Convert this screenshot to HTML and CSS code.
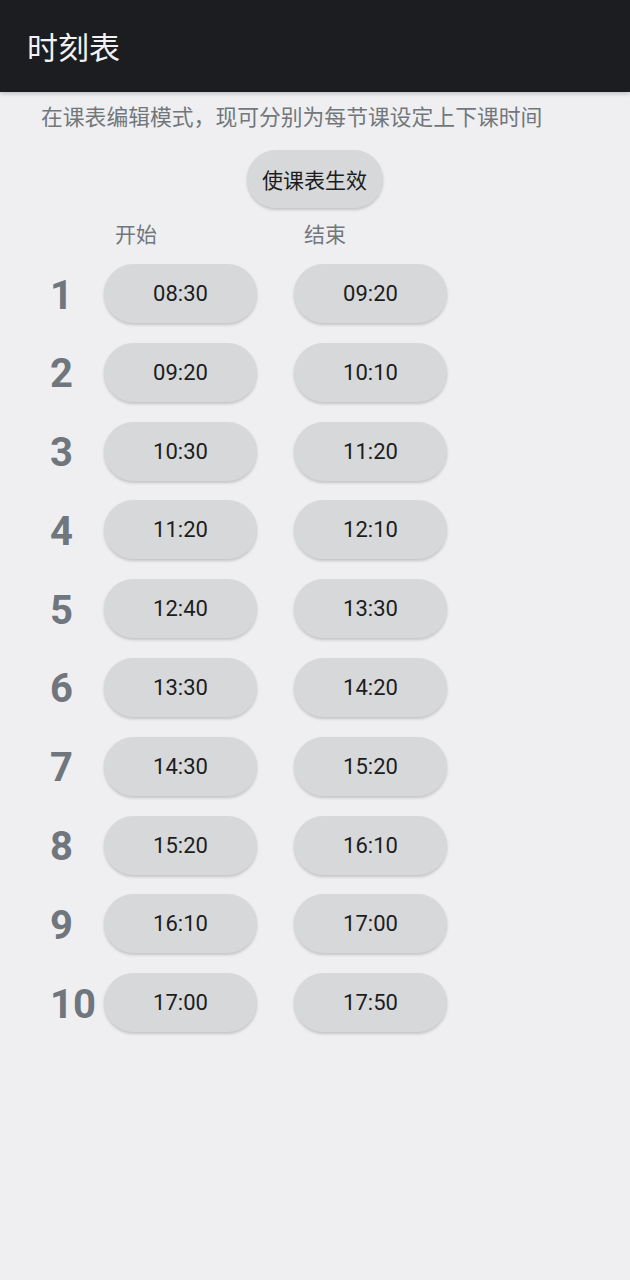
FILE: index.html
```html
<!DOCTYPE html>
<html lang="zh">
<head>
<meta charset="utf-8">
<link rel="stylesheet" href="styles.css">
</head>
<body>
<header class="appbar"><h1 class="title">时刻表</h1></header>
<main class="content">
  <p class="hint">在课表编辑模式，现可分别为每节课设定上下课时间</p>
  <div class="apply-wrap"><button class="pill apply">使课表生效</button></div>
  <div class="labels"><span class="label">开始</span><span class="label">结束</span></div>
  <div class="rows">
    <div class="row"><span class="num">1</span><button class="pill time">08:30</button><button class="pill time">09:20</button></div>
    <div class="row"><span class="num">2</span><button class="pill time">09:20</button><button class="pill time">10:10</button></div>
    <div class="row"><span class="num">3</span><button class="pill time">10:30</button><button class="pill time">11:20</button></div>
    <div class="row"><span class="num">4</span><button class="pill time">11:20</button><button class="pill time">12:10</button></div>
    <div class="row"><span class="num">5</span><button class="pill time">12:40</button><button class="pill time">13:30</button></div>
    <div class="row"><span class="num">6</span><button class="pill time">13:30</button><button class="pill time">14:20</button></div>
    <div class="row"><span class="num">7</span><button class="pill time">14:30</button><button class="pill time">15:20</button></div>
    <div class="row"><span class="num">8</span><button class="pill time">15:20</button><button class="pill time">16:10</button></div>
    <div class="row"><span class="num">9</span><button class="pill time">16:10</button><button class="pill time">17:00</button></div>
    <div class="row"><span class="num">10</span><button class="pill time">17:00</button><button class="pill time">17:50</button></div>
  </div>
</main>
</body>
</html>
```
FILE: styles.css
```css
* { box-sizing: border-box; }
html, body {
  margin: 0;
  padding: 0;
  background: #efeff2;
  font-family: "Noto Sans CJK SC", "Noto Sans", sans-serif;
}
body { min-height: 1280px; }
.appbar {
  height: 92px;
  background: #1b1d21;
  display: flex;
  align-items: center;
  padding-left: 27px;
  box-shadow: 0 2px 4px rgba(0,0,0,0.18);
  position: relative;
}
.title {
  margin: 0;
  color: #f2f2f2;
  font-size: 31px;
  font-weight: 400;
  line-height: 1;
  margin-top: -2px;
}
.content { padding: 0; }
.hint {
  margin: 0;
  padding: 10px 0 0 41px;
  font-size: 21.8px;
  line-height: 28px;
  color: #72777c;
  white-space: nowrap;
}
.apply-wrap {
  display: flex;
  justify-content: center;
  margin-top: 20px;
}
.pill {
  border: none;
  background: #d7d8d9;
  border-radius: 30px;
  box-shadow: 0 2px 3px rgba(0,0,0,0.18);
  color: #1c1d1e;
  padding: 0;
}
.apply {
  height: 58px;
  width: 136px;
  font-family: "Noto Sans CJK SC", sans-serif;
  font-size: 21px;
  margin-left: -1px;
}
.labels {
  display: flex;
  padding-left: 115px;
  margin-top: 10px;
  height: 30px;
  align-items: center;
}
.label {
  font-size: 21px;
  color: #72777c;
  width: 189px;
}
.rows {
  display: flex;
  flex-direction: column;
  gap: 19.8px;
  margin-top: 16px;
  padding-left: 50px;
}
.row {
  display: flex;
  align-items: center;
  height: 59px;
}
.num {
  width: 54px;
  font-family: Roboto, sans-serif;
  font-weight: 700;
  font-size: 40px;
  color: #6f767d;
  line-height: 1;
  margin-top: 4px;
}
.time {
  width: 153px;
  height: 59px;
  font-family: Roboto, sans-serif;
  font-size: 22px;
  margin-right: 37px;
}
```
